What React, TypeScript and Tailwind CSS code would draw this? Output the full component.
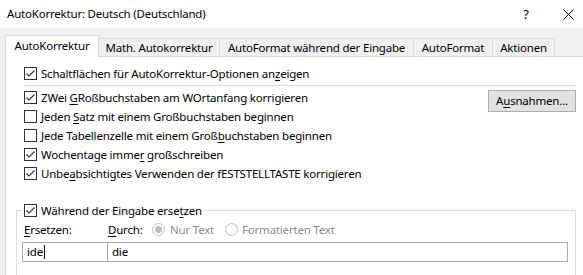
import React from "react";

const Check = ({ checked }: { checked: boolean }) => (
  <svg width="13" height="13" viewBox="0 0 13 13" className="shrink-0">
    <rect x="0.5" y="0.5" width="12" height="12" fill="#ffffff" stroke="#333333" />
    {checked && (
      <polyline points="2.5,6.5 5,9 10.5,3.5" fill="none" stroke="#333333" strokeWidth="1.1" />
    )}
  </svg>
);

const Radio = ({ checked }: { checked: boolean }) => (
  <svg width="13" height="13" viewBox="0 0 13 13" className="shrink-0">
    <circle cx="6.5" cy="6.5" r="6" fill="#ffffff" stroke="#bcbcbc" />
    {checked && <circle cx="6.5" cy="6.5" r="3.5" fill="#bcbcbc" />}
  </svg>
);

const U = ({ children }: { children: React.ReactNode }) => (
  <span className="underline underline-offset-2">{children}</span>
);

const Row = ({ checked, children }: { checked: boolean; children: React.ReactNode }) => (
  <div className="flex h-[19px] items-center gap-[4px]">
    <Check checked={checked} />
    <span className="whitespace-nowrap">{children}</span>
  </div>
);

export default function App() {
  return (
    <div
      className="w-[583px] h-[275px] overflow-hidden bg-[#f0f0f0] text-[11.5px] tracking-[-0.2px] leading-[16px] text-black flex flex-col"
      style={{ fontFamily: '"Noto Sans", "Open Sans", sans-serif' }}
    >
      {/* Title bar */}
      <div className="h-[28px] shrink-0 bg-white flex items-center pl-[7px]">
        <span className="whitespace-nowrap">AutoKorrektur: Deutsch (Deutschland)</span>
        <div className="flex-1" />
        <span className="w-[10px] text-center text-[13px] mr-[32px]">?</span>
        <svg width="11" height="11" viewBox="0 0 11 11" className="mr-[9px]">
          <path d="M0.5 0.5 L10.5 10.5 M10.5 0.5 L0.5 10.5" stroke="#000" strokeWidth="1" />
        </svg>
      </div>

      {/* Tabs */}
      <div className="h-[28px] shrink-0 flex items-end pl-[5px] pt-[7px]">
        <div className="h-[22px] w-[94px] -mb-px bg-white border border-b-0 border-[#d9d9d9] flex items-center justify-center relative z-10 pb-[1px]">
          AutoKorrektur
        </div>
        <div className="h-[18px] w-[121px] border-t border-r border-[#d9d9d9] flex items-center justify-center">
          Math. Autokorrektur
        </div>
        <div className="h-[18px] w-[194px] border-t border-r border-[#d9d9d9] flex items-center justify-center">
          AutoFormat während der Eingabe
        </div>
        <div className="h-[18px] w-[79px] border-t border-r border-[#d9d9d9] flex items-center justify-center">
          AutoFormat
        </div>
        <div className="h-[18px] w-[62px] border-t border-r border-[#d9d9d9] flex items-center justify-center">
          Aktionen
        </div>
      </div>

      {/* Panel */}
      <div className="flex-1 ml-[5px] bg-white border-t border-l border-[#d9d9d9] pt-[7px] pl-[18px] flex flex-col">
        <Row checked>
          Schaltflächen für AutoKorrektur-Optionen an<U>z</U>eigen
        </Row>
        <div className="w-[552px] h-px bg-[#dadada] mt-[2px] mb-[2px]" />
        <div className="w-[552px] flex justify-between">
          <div className="flex flex-col">
            <Row checked>
              ZWei <U>G</U>Roßbuchstaben am WOrtanfang korrigieren
            </Row>
            <Row checked={false}>
              Jeden <U>S</U>atz mit einem Großbuchstaben beginnen
            </Row>
            <Row checked={false}>
              Jede Tabellenzelle mit einem Groß<U>b</U>uchstaben beginnen
            </Row>
            <Row checked>
              Wochentage imme<U>r</U> großschreiben
            </Row>
            <Row checked>
              Unbe<U>a</U>bsichtigtes Verwenden der fESTSTELLTASTE korrigieren
            </Row>
          </div>
          <div className="mt-[2px] h-[22px] w-[88px] bg-[#e1e1e1] border border-[#adadad] flex items-center justify-center">
            A<U>u</U>snahmen...
          </div>
        </div>

        {/* Group box */}
        <div className="mt-[27px] -ml-[8px] w-[560px] h-[120px] shrink-0 border border-[#dcdcdc] flex flex-col">
          <div className="-mt-[10px] ml-[5px] pl-[2px] pr-[3px] w-fit bg-white">
            <Row checked>
              Während der Eingabe erse<U>t</U>zen
            </Row>
          </div>
          <div className="h-[19px] flex items-center pl-[7px]">
            <span className="w-[84px]">
              <U>E</U>rsetzen:
            </span>
            <span className="w-[44px]">
              <U>D</U>urch:
            </span>
            <span className="flex items-center gap-[5px] text-[#8c8c8c]">
              <Radio checked />
              <span className="w-[55px]">Nur Text</span>
            </span>
            <span className="flex items-center gap-[4px] text-[#8c8c8c]">
              <Radio checked={false} />
              <span>Formatierten Text</span>
            </span>
          </div>
          <div className="mt-[3px] ml-[5px] w-[546px] h-[20px] border border-[#a9a9a9] flex">
            <div className="w-[85px] border-r border-[#a9a9a9] flex items-center pl-[4px]">
              <span>ide</span>
              <span className="inline-block w-px h-[14px] bg-black ml-[1px]" />
            </div>
            <div className="flex-1 flex items-center pl-[4px]">die</div>
          </div>
        </div>
      </div>
    </div>
  );
}
